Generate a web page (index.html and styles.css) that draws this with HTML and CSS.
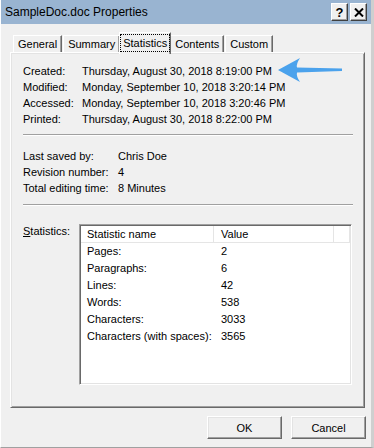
FILE: index.html
```html
<!DOCTYPE html>
<html lang="en">
<head>
    <meta charset="UTF-8">
    <meta name="viewport" content="width=device-width, initial-scale=1.0">
    <title>SampleDoc.doc Properties</title>
    <link rel="stylesheet" href="styles.css">
</head>
<body>
    <div class="window">
        <div class="titlebar">
            <span class="title">SampleDoc.doc Properties</span>
            <div class="caption-buttons">
                <div class="cap-btn help">?</div>
                <div class="cap-btn close">
                    <svg width="10" height="9" viewBox="0 0 10 9">
                        <path d="M1 0.5 L9 8.5 M9 0.5 L1 8.5" stroke="#000" stroke-width="2"/>
                    </svg>
                </div>
            </div>
        </div>

        <div class="tabs">
            <div class="tab">General</div>
            <div class="tab">Summary</div>
            <div class="tab active"><span class="focus">Statistics</span></div>
            <div class="tab">Contents</div>
            <div class="tab">Custom</div>
        </div>

        <div class="panel">
            <div class="props dates">
                <span>Created:</span><span>Thursday, August 30, 2018 8:19:00 PM</span>
                <span>Modified:</span><span>Monday, September 10, 2018 3:20:14 PM</span>
                <span>Accessed:</span><span>Monday, September 10, 2018 3:20:46 PM</span>
                <span>Printed:</span><span>Thursday, August 30, 2018 8:22:00 PM</span>
            </div>
            <div class="separator"></div>
            <div class="props saved">
                <span>Last saved by:</span><span>Chris Doe</span>
                <span>Revision number:</span><span>4</span>
                <span>Total editing time:</span><span>8 Minutes</span>
            </div>
            <div class="separator second"></div>
            <div class="stats-row">
                <span class="stats-label"><u>S</u>tatistics:</span>
                <div class="listbox">
                    <div class="list-header">
                        <span class="col-name">Statistic name</span>
                        <span class="col-value">Value</span>
                        <span class="col-rest"></span>
                    </div>
                    <div class="list-row"><span class="col-name">Pages:</span><span class="col-value">2</span></div>
                    <div class="list-row"><span class="col-name">Paragraphs:</span><span class="col-value">6</span></div>
                    <div class="list-row"><span class="col-name">Lines:</span><span class="col-value">42</span></div>
                    <div class="list-row"><span class="col-name">Words:</span><span class="col-value">538</span></div>
                    <div class="list-row"><span class="col-name">Characters:</span><span class="col-value">3033</span></div>
                    <div class="list-row"><span class="col-name">Characters (with spaces):</span><span class="col-value">3565</span></div>
                </div>
            </div>
        </div>

        <div class="dialog-buttons">
            <div class="btn">OK</div>
            <div class="btn">Cancel</div>
        </div>

        <!-- callout arrow pointing at the Created date -->
        <svg class="arrow" width="68" height="28" viewBox="0 0 68 28">
            <path d="M2 14 L24 2 Q20 8 21 11.5 L66 12.6 L66 15 L21 16.5 Q20 20 24 26 Z" fill="#4ba2ec"/>
        </svg>
    </div>
</body>
</html>
```

FILE: styles.css
```css
body {
    margin: 0;
    font-family: "Liberation Sans", Arial, sans-serif;
    font-size: 11px;
    color: #000;
}
.window {
    position: relative;
    width: 374px;
    height: 448px;
    box-sizing: border-box;
    background-color: #f0f0f0;
    border-left: 1px solid #fff;
    border-right: 3px solid #cfcfcf;
    border-bottom: 1px solid #a0a0a0;
}
.titlebar {
    height: 24px;
    background-color: #99b4d1;
    display: flex;
    align-items: center;
    justify-content: space-between;
    padding: 0 4px;
}
.title {
    font-size: 12px;
}
.caption-buttons {
    display: flex;
    gap: 2px;
}
.cap-btn {
    width: 15px;
    height: 16px;
    background-color: #f0f0f0;
    border: 1px solid;
    border-color: #fff #404040 #404040 #fff;
    box-shadow: inset -1px -1px #a0a0a0;
    display: flex;
    justify-content: center;
    align-items: center;
    font-weight: bold;
    font-size: 13px;
}

/* tabs */
.tabs {
    display: flex;
    align-items: flex-end;
    height: 20px;
    margin-top: 8px;
    padding-left: 12px;
}
.tab {
    height: 16px;
    line-height: 16px;
    padding: 0 4px;
    margin-right: 1px;
    border-top: 1px solid #fff;
    border-left: 1px solid #fff;
    border-right: 1px solid #696969;
    box-shadow: inset -1px 0 #a0a0a0;
}
.tab.active {
    height: 21px;
    padding: 2px 1px 0;
    box-sizing: content-box;
    height: 19px;
    line-height: 16px;
    margin: 0 -1px -2px -2px;
    background-color: #f0f0f0;
    position: relative;
    z-index: 1;
}
.focus {
    display: inline-block;
    outline: 1px dotted #000;
    padding: 0 2px;
}

/* property sheet */
.panel {
    height: 356px;
    box-sizing: border-box;
    margin: 0 6px 0 9px;
    padding: 10px 11px 0 12px;
    border: 1px solid;
    border-color: #fff #696969 #696969 #fff;
    box-shadow: inset 1px 1px #e3e3e3, inset -1px -1px #a0a0a0;
}
.props {
    display: grid;
    line-height: 16px;
}
.dates {
    grid-template-columns: 59px 1fr;
}
.saved {
    grid-template-columns: 95px 1fr;
}
.separator {
    height: 0;
    border-top: 1px solid #a0a0a0;
    border-bottom: 1px solid #fff;
    margin: 7px 0 12px;
}
.separator.second {
    margin: 8px 0 18px;
}
.stats-row {
    display: flex;
}
.stats-label {
    width: 56px;
    line-height: 14px;
}
.listbox {
    width: 273px;
    height: 161px;
    box-sizing: border-box;
    background-color: #fff;
    border: 1px solid;
    border-color: #a0a0a0 #fff #fff #a0a0a0;
    box-shadow: inset 1px 1px #696969, inset -1px -1px #e3e3e3;
    padding: 1px;
}
.list-header {
    display: flex;
    height: 16px;
    line-height: 16px;
    border-bottom: 1px solid #e5e5e5;
}
.list-header span {
    border-right: 1px solid #e5e5e5;
}
.list-row {
    display: flex;
    line-height: 17px;
}
.col-name {
    width: 133px;
    box-sizing: border-box;
    padding-left: 6px;
    white-space: nowrap;
}
.col-value {
    width: 120px;
    box-sizing: border-box;
    padding-left: 7px;
}
.col-rest {
    flex: 1;
}

/* OK / Cancel */
.dialog-buttons {
    display: flex;
    justify-content: flex-end;
    gap: 9px;
    margin-top: 8px;
    padding-right: 5px;
}
.btn {
    width: 75px;
    height: 23px;
    box-sizing: border-box;
    border: 1px solid;
    border-color: #fff #696969 #696969 #fff;
    box-shadow: inset -1px -1px #a0a0a0, inset 1px 1px #e3e3e3;
    display: flex;
    justify-content: center;
    align-items: center;
}
.arrow {
    position: absolute;
    left: 275px;
    top: 56px;
}
```
